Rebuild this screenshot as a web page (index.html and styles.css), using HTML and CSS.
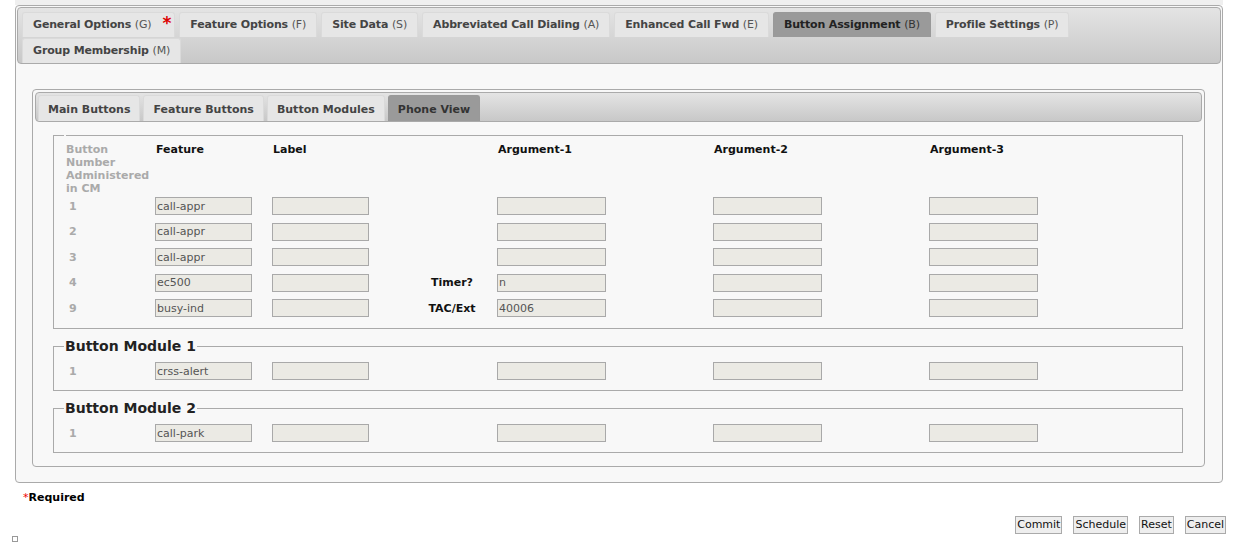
FILE: index.html
```html
<!DOCTYPE html>
<html lang="en">
<head>
  <meta charset="UTF-8">
  <title>Button Assignment</title>
  <link rel="stylesheet" href="styles.css">
</head>
<body>
  <div class="top-strip"></div>

  <div class="panel">
    <div class="tabbar">
      <a href="#" class="tab first">General Options <span class="key">(G)</span><span class="star">*</span></a>
      <a href="#" class="tab">Feature Options <span class="key">(F)</span></a>
      <a href="#" class="tab">Site Data <span class="key">(S)</span></a>
      <a href="#" class="tab">Abbreviated Call Dialing <span class="key">(A)</span></a>
      <a href="#" class="tab">Enhanced Call Fwd <span class="key">(E)</span></a>
      <a href="#" class="tab active">Button Assignment <span class="key">(B)</span></a>
      <a href="#" class="tab">Profile Settings <span class="key">(P)</span></a>
      <a href="#" class="tab">Group Membership <span class="key">(M)</span></a>
    </div>

    <div class="subpanel">
      <div class="tabbar sub">
        <a href="#" class="tab">Main Buttons</a>
        <a href="#" class="tab">Feature Buttons</a>
        <a href="#" class="tab">Button Modules</a>
        <a href="#" class="tab active">Phone View</a>
      </div>

      <fieldset class="group main">
        <legend></legend>
        <div class="row head">
          <div class="num">Button Number Administered in CM</div>
          <div>Feature</div>
          <div>Label</div>
          <div></div>
          <div>Argument-1</div>
          <div>Argument-2</div>
          <div>Argument-3</div>
        </div>
        <div class="row">
          <div class="num">1</div>
          <input class="field" value="call-appr" readonly>
          <input class="field" readonly>
          <div class="arg-label"></div>
          <input class="field wide" readonly>
          <input class="field wide" readonly>
          <input class="field wide" readonly>
        </div>
        <div class="row">
          <div class="num">2</div>
          <input class="field" value="call-appr" readonly>
          <input class="field" readonly>
          <div class="arg-label"></div>
          <input class="field wide" readonly>
          <input class="field wide" readonly>
          <input class="field wide" readonly>
        </div>
        <div class="row">
          <div class="num">3</div>
          <input class="field" value="call-appr" readonly>
          <input class="field" readonly>
          <div class="arg-label"></div>
          <input class="field wide" readonly>
          <input class="field wide" readonly>
          <input class="field wide" readonly>
        </div>
        <div class="row">
          <div class="num">4</div>
          <input class="field" value="ec500" readonly>
          <input class="field" readonly>
          <div class="arg-label">Timer?</div>
          <input class="field wide" value="n" readonly>
          <input class="field wide" readonly>
          <input class="field wide" readonly>
        </div>
        <div class="row">
          <div class="num">9</div>
          <input class="field" value="busy-ind" readonly>
          <input class="field" readonly>
          <div class="arg-label">TAC/Ext</div>
          <input class="field wide" value="40006" readonly>
          <input class="field wide" readonly>
          <input class="field wide" readonly>
        </div>
      </fieldset>

      <fieldset class="group module">
        <legend>Button Module 1</legend>
        <div class="row">
          <div class="num">1</div>
          <input class="field" value="crss-alert" readonly>
          <input class="field" readonly>
          <div class="arg-label"></div>
          <input class="field wide" readonly>
          <input class="field wide" readonly>
          <input class="field wide" readonly>
        </div>
      </fieldset>

      <fieldset class="group module">
        <legend>Button Module 2</legend>
        <div class="row">
          <div class="num">1</div>
          <input class="field" value="call-park" readonly>
          <input class="field" readonly>
          <div class="arg-label"></div>
          <input class="field wide" readonly>
          <input class="field wide" readonly>
          <input class="field wide" readonly>
        </div>
      </fieldset>
    </div>
  </div>

  <div class="required"><span class="star">*</span>Required</div>

  <div class="actions">
    <button>Commit</button>
    <button>Schedule</button>
    <button>Reset</button>
    <button>Cancel</button>
  </div>

  <div class="tiny-box"></div>
</body>
</html>
```

FILE: styles.css
```css
body {
  font-family: "DejaVu Sans", Verdana, sans-serif;
  font-size: 11px;
  margin: 0;
  padding: 0;
  background-color: #fff;
  color: #222;
}

.top-strip {
  height: 5px;
  margin-left: 15px;
  margin-right: 11px;
  background-color: #efefef;
}

.panel {
  margin: 0 11px 0 15px;
  border: 1px solid #aaa;
  border-radius: 4px;
  background-color: #f8f8f8;
  padding: 1px 1px 15px 1px;
}

/* tab bars */
.tabbar {
  display: flex;
  flex-wrap: wrap;
  column-gap: 4px;
  row-gap: 1px;
  padding: 4px 4px 0 4px;
  border: 1px solid #aaa;
  border-radius: 4px;
  background: linear-gradient(#e4e4e4, #c8c8c8);
}

.tab {
  display: block;
  height: 24px;
  line-height: 24px;
  padding: 0 10px;
  background-color: #e6e6e6;
  border: 1px solid #dadada;
  border-bottom: none;
  border-radius: 3px 3px 0 0;
  color: #444;
  font-weight: bold;
  letter-spacing: -0.15px;
  text-decoration: none;
  white-space: nowrap;
}

.tab .key {
  font-weight: normal;
  color: #555;
}

.tab.first {
  padding-right: 3px;
}

.tab .star {
  color: #d00;
  font-size: 17px;
  margin-left: 11px;
  vertical-align: top;
  line-height: 20px;
}

.tab.active {
  background-color: #9a9a9a;
  border-color: #999;
  color: #222;
}

.tab.active .key {
  color: #333;
}

.subpanel {
  margin: 25px 16px 0 15px;
  border: 1px solid #aaa;
  border-radius: 4px;
  padding: 2px 2px 13px 2px;
}

.tabbar.sub {
  padding: 2px 2px 0 2px;
  column-gap: 3px;
}

.tabbar.sub .tab {
  height: 25px;
  line-height: 27px;
  padding: 0 9px;
  letter-spacing: 0;
}

.tabbar.sub .tab.active {
  color: #333;
}

/* fieldsets with the button rows */
.group {
  margin: 12px 19px 0 18px;
  border: 1px solid #aaa;
  padding: 0 0 11px 9px;
}

.group.main {
  margin-top: 13px;
  padding-top: 7px;
}

.group.main legend {
  padding: 0 1px;
  height: 0;
}

.group.module {
  margin-top: 9px;
  padding-top: 8px;
  padding-bottom: 10px;
}

.group legend {
  font-size: 14px;
  font-weight: bold;
  color: #222;
  padding: 0 1px;
  margin-left: 1px;
}

.row {
  display: grid;
  grid-template-columns: 92px 117px 135px 90px 216px 216px 1fr;
  align-items: center;
  margin-top: 7.5px;
}

.row.head {
  align-items: start;
  margin-top: 0;
  margin-bottom: 0;
  font-weight: bold;
  color: #111;
  line-height: 13px;
}

.row.head + .row {
  margin-top: 2px;
}

.row.head > div {
  padding-left: 1px;
}

.num {
  color: #aaa;
  font-weight: bold;
  padding-left: 6px;
}

.row.head .num {
  padding-left: 3px;
  color: #aaa;
}

.group.module .row {
  margin-top: 0;
}

.arg-label {
  text-align: center;
  font-weight: bold;
  color: #111;
}

.field {
  box-sizing: border-box;
  width: 97px;
  height: 18px;
  margin: 0;
  padding: 0 1px;
  border: 1px solid #a9a9a9;
  background-color: #ebeae4;
  color: #555;
  font-family: "DejaVu Sans", Verdana, sans-serif;
  font-size: 11px;
  outline: none;
}

.field.wide {
  width: 109px;
}

.required {
  margin: 8px 0 0 23px;
  font-size: 11px;
  font-weight: bold;
  color: #000;
}

.required .star {
  color: #e00;
  font-weight: normal;
}

.actions {
  display: flex;
  justify-content: flex-end;
  gap: 11px;
  margin: 12px 8px 0 0;
}

.actions button {
  font-family: "DejaVu Sans", Verdana, sans-serif;
  font-size: 11px;
  color: #111;
  background-color: #eee;
  border: 1px solid #aaa;
  border-radius: 0;
  padding: 1px 1px;
  height: 18px;
  line-height: 14px;
}

.tiny-box {
  width: 4px;
  height: 4px;
  margin: 2px 0 0 12px;
  border: 1px solid #999;
}
```
